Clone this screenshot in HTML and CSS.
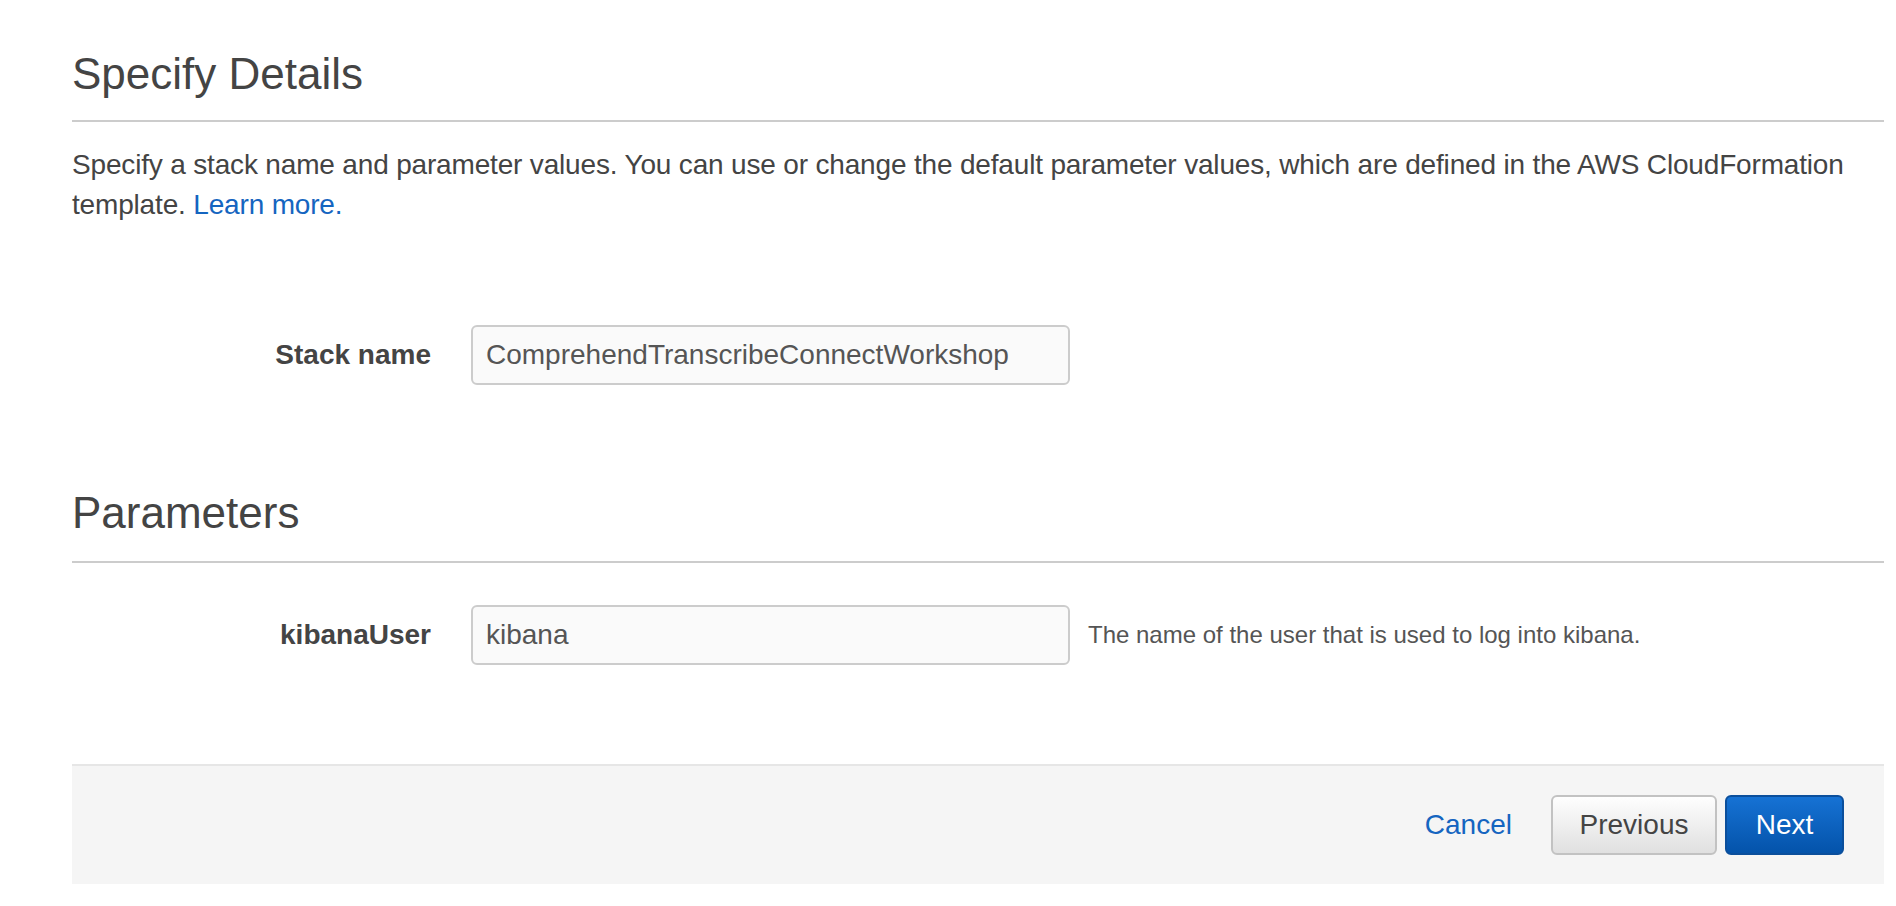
FILE: index.html
```html
<!DOCTYPE html>
<html lang="en">
<head>
<meta charset="utf-8">
<title>Specify Details</title>
<link rel="stylesheet" href="styles.css">
</head>
<body>
<div class="page">
  <h2 class="section-title">Specify Details</h2>
  <p class="intro">Specify a stack name and parameter values. You can use or change the default parameter values, which are defined in the AWS CloudFormation template. <a class="link" href="#">Learn more.</a></p>

  <div class="form-row stack-row">
    <label class="form-label" for="stackName">Stack name</label>
    <input class="form-input" id="stackName" type="text" value="ComprehendTranscribeConnectWorkshop">
  </div>

  <h2 class="section-title params-title">Parameters</h2>

  <div class="form-row param-row">
    <label class="form-label" for="kibanaUser">kibanaUser</label>
    <input class="form-input" id="kibanaUser" type="text" value="kibana">
    <span class="help-text">The name of the user that is used to log into kibana.</span>
  </div>

  <div class="footer">
    <a class="link cancel" href="#">Cancel</a>
    <button class="btn btn-default" type="button">Previous</button>
    <button class="btn btn-primary" type="button">Next</button>
  </div>
</div>
</body>
</html>
```

FILE: styles.css
```css
html, body {
  margin: 0;
  padding: 0;
  background: #ffffff;
}

body {
  font-family: "Liberation Sans", Arial, Helvetica, sans-serif;
  color: #444444;
}

.page {
  padding: 50px 12px 0 72px;
}

.section-title {
  margin: 0;
  font-size: 44px;
  line-height: 48px;
  font-weight: 400;
  color: #444444;
  padding-bottom: 22px;
  border-bottom: 2px solid #cccccc;
}

.params-title {
  margin-top: 104px;
  padding-bottom: 24px;
}

.intro {
  margin: 23px 0 0;
  font-size: 28px;
  line-height: 40px;
  letter-spacing: -0.17px;
  color: #444444;
}

.link {
  color: #1565c0;
  text-decoration: none;
}

.form-row {
  display: flex;
  align-items: center;
}

.stack-row {
  margin-top: 100px;
}

.param-row {
  margin-top: 42px;
}

.form-label {
  width: 359px;
  margin-right: 40px;
  text-align: right;
  font-size: 28px;
  font-weight: 700;
  color: #444444;
}

.form-input {
  box-sizing: border-box;
  width: 599px;
  height: 60px;
  margin: 0;
  padding: 0 13px;
  border: 2px solid #cccccc;
  border-radius: 6px;
  background: #fafafa;
  font-family: "Liberation Sans", Arial, Helvetica, sans-serif;
  font-size: 28px;
  color: #555555;
  outline: none;
}

.help-text {
  margin-left: 18px;
  font-size: 24px;
  color: #555555;
}

.footer {
  margin-top: 99px;
  display: flex;
  justify-content: flex-end;
  align-items: center;
  padding: 29px 40px;
  background: #f5f5f5;
  border-top: 2px solid #e6e6e6;
}

.cancel {
  font-size: 28px;
  margin-right: 39px;
}

.btn {
  box-sizing: border-box;
  height: 60px;
  padding: 0;
  border-radius: 6px;
  font-family: "Liberation Sans", Arial, Helvetica, sans-serif;
  font-size: 28px;
  cursor: pointer;
}

.btn-default {
  width: 166px;
  margin-right: 8px;
  border: 2px solid #c2c2c2;
  background: linear-gradient(#fefefe, #e0e0e0);
  color: #444444;
}

.btn-primary {
  width: 119px;
  border: 2px solid #0b4f9c;
  background: linear-gradient(#1672d4, #0453aa);
  color: #ffffff;
}
```
